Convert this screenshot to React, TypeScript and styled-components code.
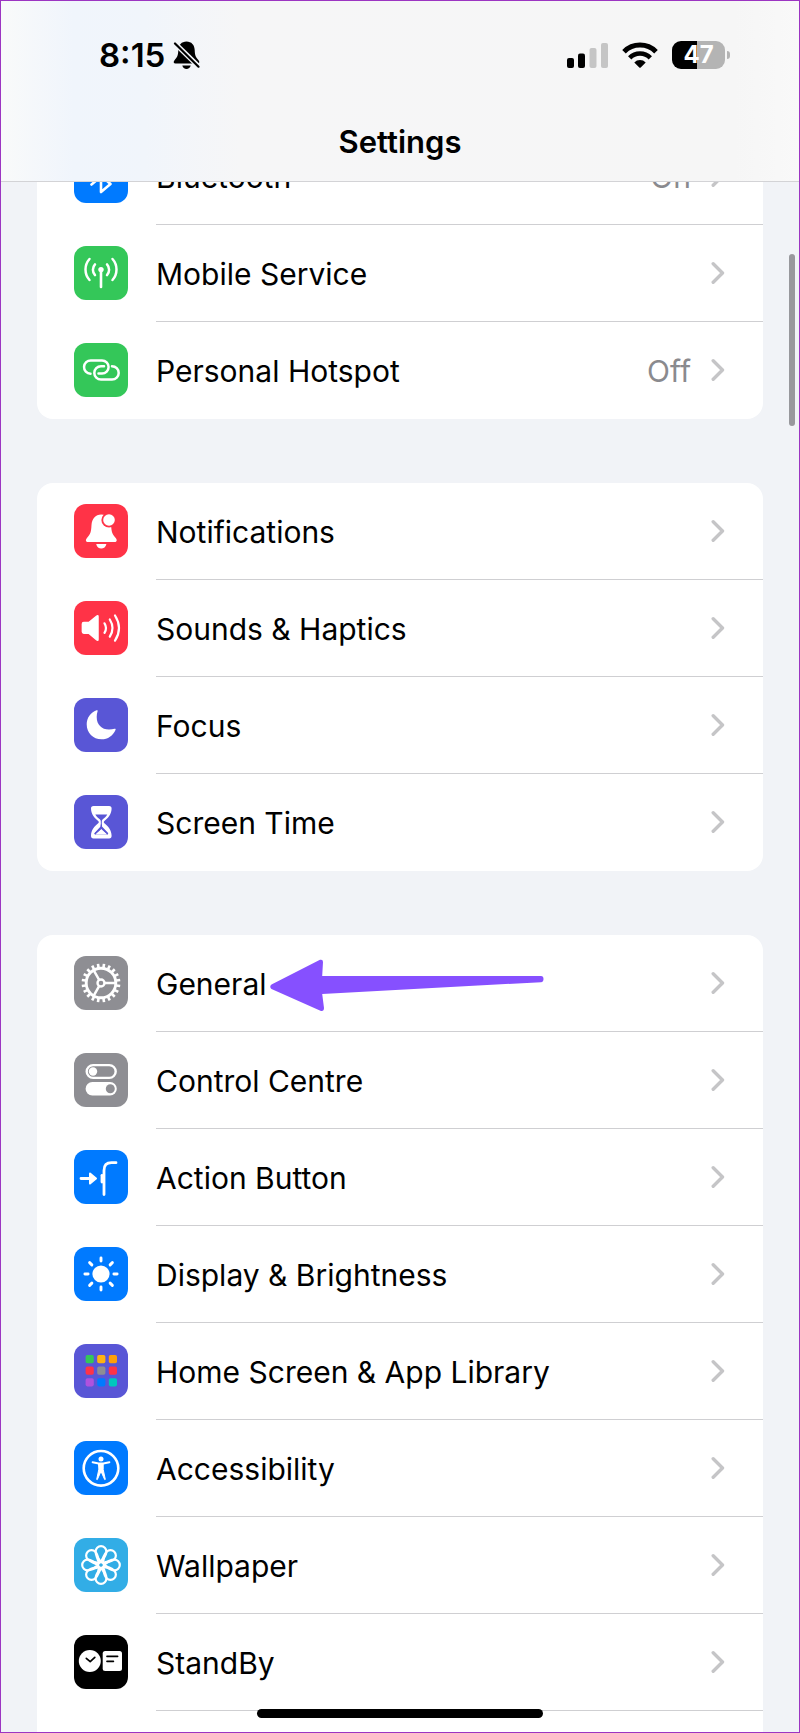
import React from "react";
import styled, { createGlobalStyle } from "styled-components";

const GlobalStyle = createGlobalStyle`
  *, *::before, *::after { box-sizing: border-box; }
  body { margin: 0; background: #f1f3f7; }
`;

const Screen = styled.div`
  position: relative;
  display: flex;
  flex-direction: column;
  height: 100vh;
  overflow: hidden;
  border: 1px solid #9c35c2;
  background: #f1f3f7;
  color: #000;
  font-family: Inter, "Liberation Sans", sans-serif;
`;

const Header = styled.header`
  flex: none;
  border-bottom: 1px solid #d3d3d6;
  background: linear-gradient(90deg, #f9fafa 0%, #f0f5fc 9%, #f1f5fb 18%, #f6f6f7 30%, #f6f6f6 92%, #f9f9f9 100%);
`;

const StatusBar = styled.div`
  display: flex;
  align-items: center;
  justify-content: space-between;
  height: 108px;
  padding: 0 69px 0 98px;
`;

const StatusGroup = styled.div<{ $gap: number }>`
  display: flex;
  align-items: center;
  gap: ${(p) => p.$gap}px;
`;

const Time = styled.time`
  font-size: 33px;
  line-height: 40px;
  font-weight: 600;
`;

const Battery = styled.div`
  display: flex;
  align-items: center;
  gap: 2px;

  &::after {
    content: "";
    width: 3px;
    height: 8px;
    border-radius: 0 4px 4px 0;
    background: #b4b4b4;
  }
`;

const BatteryBody = styled.div<{ $level: number }>`
  width: 53px;
  height: 28px;
  border-radius: 9px;
  background: linear-gradient(90deg, #000 ${(p) => p.$level}%, #b4b4b4 ${(p) => p.$level}%);
  color: #fff;
  font-size: 24px;
  line-height: 28px;
  font-weight: 700;
  text-align: center;
`;

const Title = styled.h1`
  margin: 0;
  padding-bottom: 6px;
  font-size: 31px;
  line-height: 66px;
  font-weight: 600;
  text-align: center;
`;

const Scroller = styled.main`
  flex: 1;
  min-height: 0;
  overflow: hidden;
`;

const Groups = styled.div`
  display: flex;
  flex-direction: column;
  gap: 64px;
  margin-top: -54px;
  padding: 0 36px;
`;

const Group = styled.ul`
  margin: 0;
  padding: 0;
  list-style: none;
  border-radius: 16px;
  background: #fff;
`;

const Item = styled.li`
  position: relative;
`;

const RowLink = styled.a`
  display: flex;
  gap: 28px;
  height: 97px;
  padding-left: 37px;
  color: inherit;
  text-decoration: none;
`;

const Tile = styled.span<{ $color: string }>`
  flex: none;
  width: 54px;
  height: 54px;
  margin-top: 21px;
  border-radius: 12px;
  background: ${(p) => p.$color};

  svg { display: block; }
`;

const RowBody = styled.span`
  display: flex;
  flex: 1;
  align-items: center;
  gap: 20px;
  padding-right: 38px;
  border-bottom: 1px solid #cfcfd2;

  ${Item}:last-child & { border-bottom-color: transparent; }
`;

const Label = styled.span`
  flex: 1;
  padding-top: 2px;
  font-size: 30px;
  line-height: 40px;
`;

const Value = styled(Label)`
  flex: none;
  color: #8a8a8e;
`;

const Pointer = styled.svg`
  position: absolute;
  top: 24px;
  left: 233px;
`;

const ScrollThumb = styled.div`
  position: absolute;
  top: 253px;
  right: 4px;
  width: 6px;
  height: 172px;
  border-radius: 3px;
  background: #98989d;
`;

const HomeIndicator = styled.div`
  position: absolute;
  bottom: 14px;
  left: 50%;
  width: 286px;
  height: 9px;
  border-radius: 5px;
  background: #000;
  transform: translateX(-50%);
`;

const Glyph = ({ children }: { children: React.ReactNode }) => (
  <svg width="54" height="54" viewBox="0 0 54 54" fill="none" stroke="#fff" strokeLinecap="round" strokeLinejoin="round" aria-hidden="true">
    {children}
  </svg>
);

const turns = (count: number) => Array.from({ length: count }, (_, i) => (i * 360) / count);

const BluetoothIcon = () => (
  <Glyph><path strokeWidth="2.6" d="M17.5 18.5 36.5 35 27 43V11l9.500 8.500L17.500 35.500" /></Glyph>
);

const AntennaIcon = () => (
  <Glyph>
    <circle cx="27" cy="23.600" r="2.700" fill="#fff" stroke="none" />
    <path strokeWidth="2.600" d="M27 24v17" />
    <path strokeWidth="2.500" d="M21 18.300a8 8 0 0 0 0 10.800M33 18.300a8 8 0 0 1 0 10.800M15.500 13a15.800 15.800 0 0 0 0 21M38.500 13a15.800 15.800 0 0 1 0 21" />
  </Glyph>
);

const HotspotIcon = () => (
  <Glyph>
    <path strokeWidth="2.500" d="M16.500 30.800a6.700 6.700 0 0 1 .5-13.400h11a6.600 6.600 0 0 1 0 13.200h-3.500" />
    <path strokeWidth="2.500" d="M38 23.200a6.700 6.700 0 0 1 0 13.400H27a6.700 6.700 0 0 1 0-13.400h3" />
  </Glyph>
);

const BellIcon = () => (
  <Glyph>
    <g stroke="none">
      <path fill="#fff" d="M27.300 10.500c-6 0-9.300 4.500-9.800 10.500-.4 7-1 9-4.500 13-1.800 2.300-1.200 4 1 4h26.700c2.200 0 2.700-1.700 1-4-3.500-4-4.200-6-4.600-13-.5-6-3.800-10.500-9.800-10.500ZM22.200 40h10.200c-.6 3-2.700 4.600-5.100 4.600S22.800 43 22.200 40Z" />
      <circle cx="35" cy="16" r="7.600" fill="#ff3347" />
      <circle cx="35" cy="16" r="5.800" fill="#fff" />
    </g>
  </Glyph>
);

const SpeakerIcon = () => (
  <Glyph>
    <path fill="#fff" strokeWidth="1.500" d="M9.800 21.500h5l8-6.500q1.200-.8 1.200.6v22.800q0 1.400-1.200.6l-8-6.800h-5q-1.400 0-1.400-1.400v-7.900q0-1.400 1.400-1.400Z" />
    <path strokeWidth="2.200" d="M30.500 22.300q3 4.800 0 9.600M35.800 18.500q5.400 8.600 0 17.200M41 14.500q8 12.600 0 25.200" />
  </Glyph>
);

const MoonIcon = () => (
  <Glyph>
    <path fill="#fff" stroke="none" d="M22.500 12.300c.8-.4 1.400.1 1.100.9-.6 1.600-.9 3.600-.9 5.800 0 7.500 4.900 12.600 12.300 12.600 2.100 0 4-.3 5.500-.8.900-.3 1.400.3 1 1.100-2.400 5.700-7.700 9.400-13.900 9.400-8.700 0-14.900-6.300-14.900-15 0-6.400 3.900-11.700 9.800-14Z" />
  </Glyph>
);

const HourglassIcon = () => (
  <Glyph>
    <path fill="#fff" stroke="none" d="M19.500 11h15.600c1.700 0 2.600 1 2.500 2.700-.2 5.600-3.300 9-7.200 12.300-.8.700-.8 1.600 0 2.300 3.900 3.300 7 6.700 7.200 12.300.1 1.800-.8 2.900-2.500 2.900H19.500c-1.700 0-2.600-1.100-2.500-2.900.2-5.600 3.300-9 7.200-12.300.8-.7.800-1.600 0-2.300-3.900-3.300-7-6.700-7.200-12.300-.1-1.700.8-2.700 2.500-2.700Z" />
    <path fill="#5956d6" stroke="none" d="M21.300 19.400h12c-1.200 2-2.800 3.400-4.500 4.900-.7.600-1 1.300-1 2.300v4.700l6.200 6.700c.4.800.1 1.400-.6 1.400H21.200c-.8 0-1-.7-.6-1.400l6.200-6.700v-4.700c0-1-.3-1.700-1-2.300-1.700-1.500-3.300-2.900-4.500-4.900Z" />
    <path fill="#fff" stroke="none" d="m27.300 33.800 5.300 4.700c.4.500.2 1-.4 1H22.400c-.6 0-.9-.5-.4-1Z" />
    <path stroke="#5956d6" strokeWidth="1.400" d="M27.300 30v3M21.300 38.500l5-4.500M33.300 38.500l-5-4.500" />
  </Glyph>
);

const GearIcon = () => (
  <Glyph>
    <circle cx="27" cy="27" r="14.800" strokeWidth="2.900" />
    <circle cx="27" cy="27" r="3.500" strokeWidth="2.400" />
    {turns(20).map((a) => (
      <path key={a} strokeWidth="2.600" strokeLinecap="butt" d="M42.500 27h3.900" transform={`rotate(${a + 9} 27 27)`} />
    ))}
    {turns(3).map((a) => (
      <path key={a} strokeWidth="2.500" d="M31 27h10.500" transform={`rotate(${a} 27 27)`} />
    ))}
  </Glyph>
);

const SwitchesIcon = () => (
  <Glyph>
    <rect x="12.700" y="12.100" width="29" height="12.800" rx="6.400" strokeWidth="2.400" />
    <circle cx="19" cy="18.500" r="4.200" fill="#fff" stroke="none" />
    <rect x="11.600" y="29" width="31.200" height="13.400" rx="6.700" fill="#fff" stroke="none" />
    <circle cx="36.300" cy="35.700" r="4.500" fill="#8e8e93" stroke="none" />
  </Glyph>
);

const ActionIcon = () => (
  <Glyph>
    <path strokeWidth="2.800" d="M7 28.500h10M30 44.500V20.500q0-7.800 7.500-7.800h4.500" />
    <path fill="#fff" strokeWidth="2" d="m16 23.500 6 5-6 5Z" />
    <path strokeWidth="2.800" d="M28 25.300v6.700" />
  </Glyph>
);

const SunIcon = () => (
  <Glyph>
    <circle cx="27" cy="27" r="8.600" fill="#fff" stroke="none" />
    {turns(8).map((a) => (
      <path key={a} strokeWidth="2.900" d="M39.900 27h3.200" transform={`rotate(${a} 27 27)`} />
    ))}
  </Glyph>
);

const gridColors = ["#34c759", "#ffb210", "#ff9f0a", "#ff3347", "#8e8e93", "#ff3347", "#af52de", "#007aff", "#00c7be"];

const AppGridIcon = () => (
  <Glyph>
    {gridColors.map((fill, i) => (
      <rect key={i} x={11.6 + (i % 3) * 11.6} y={11 + Math.floor(i / 3) * 11.6} width="8.200" height="8.200" rx="1.800" fill={fill} stroke="none" />
    ))}
  </Glyph>
);

const AccessibilityIcon = () => (
  <Glyph>
    <circle cx="27" cy="27.300" r="17.300" strokeWidth="2.600" />
    <circle cx="27" cy="17.900" r="2.500" fill="#fff" stroke="none" />
    <path strokeWidth="1.900" d="m18.600 21.300 6 1.200h4.800l6-1.200" />
    <path fill="#fff" strokeWidth="1" d="M24.800 22.500h4.400v6l2.100 9.900-.6.200L27.300 31h-.6l-3.400 7.600-.6-.2 2.100-9.900Z" />
  </Glyph>
);

const FlowerIcon = () => (
  <Glyph>
    <circle cx="27" cy="27" r="2.800" strokeWidth="1.900" />
    {turns(8).map((a) => (
      <path key={a} strokeWidth="2.200" d="M24 22.500c-.6-3-2.400-5-2.400-8.900a5.400 5.400 0 0 1 10.800 0c0 3.900-1.800 5.900-5.400 10.400-3.600-4.500-5.400-6.500-5.400-10.400" transform={`rotate(${a} 27 27)`} />
    ))}
  </Glyph>
);

const StandByIcon = () => (
  <Glyph>
    <circle cx="15.800" cy="26" r="11" fill="#fff" stroke="none" />
    <rect x="28.700" y="16" width="19.300" height="20" rx="2.500" fill="#fff" stroke="none" />
    <path stroke="#000" strokeWidth="1.700" d="m12.300 23.300 3.900 3.400 4.600-4.400M33 21.300h10.600M33 26.300h6.400" />
  </Glyph>
);

const MutedBell = () => (
  <svg width="27" height="28" viewBox="0 0 27 28" aria-hidden="true">
    <path fill="#000" d="M13.500.500c-5 0-8 3.500-8.200 8.500-.2 5.500-.9 7-3.800 10.200-1.400 1.800-1 3.300 1 3.300h22c2 0 2.400-1.500 1-3.300-2.900-3.200-3.600-4.700-3.800-10.200-.2-5-3.200-8.500-8.200-8.500ZM9.300 24.500h8.400c-.5 2.200-2.200 3.400-4.200 3.400s-3.700-1.200-4.200-3.400Z" />
    <path stroke="#f3f5f9" strokeWidth="5" d="M0 .500 28 27.800" />
    <path stroke="#000" strokeWidth="2.200" strokeLinecap="round" d="m2 2.500 23.500 23.200" />
  </svg>
);

const SignalBars = () => (
  <svg width="41" height="26" viewBox="0 0 41 26" aria-hidden="true">
    <rect x="0" y="16" width="7" height="10" rx="2" />
    <rect x="11" y="11.500" width="7" height="14.500" rx="2" />
    <rect x="22.500" y="6" width="7" height="20" rx="2" fill="#c5c5c5" />
    <rect x="34" y="1" width="7" height="25" rx="2" fill="#c5c5c5" />
  </svg>
);

const WifiIcon = () => (
  <svg width="36" height="26" viewBox="0 0 36 26" fill="none" stroke="#000" aria-hidden="true">
    <path strokeWidth="5" d="M2 9.700a22.600 22.600 0 0 1 32 0" />
    <path strokeWidth="4.600" d="M7.700 15.900a14.300 14.300 0 0 1 20.600 0" />
    <path fill="#000" stroke="none" d="M12.300 20.500a8 8 0 0 1 11.400 0l-5 4.900q-.7.700-1.400 0Z" />
  </svg>
);

const Chevron = () => (
  <svg width="14" height="24" viewBox="0 0 14 24" fill="none" stroke="#c5c5c7" strokeWidth="3.400" strokeLinecap="round" strokeLinejoin="round" aria-hidden="true">
    <path d="m2.200 2.800 9.300 9.200-9.300 9.200" />
  </svg>
);

type Entry = { label: string; color: string; icon: React.ReactNode; value?: string; pointed?: boolean };

const groups: Entry[][] = [
  [
    { label: "Bluetooth", color: "#007aff", icon: <BluetoothIcon />, value: "On" },
    { label: "Mobile Service", color: "#34c759", icon: <AntennaIcon /> },
    { label: "Personal Hotspot", color: "#34c759", icon: <HotspotIcon />, value: "Off" },
  ],
  [
    { label: "Notifications", color: "#ff3347", icon: <BellIcon /> },
    { label: "Sounds & Haptics", color: "#ff3347", icon: <SpeakerIcon /> },
    { label: "Focus", color: "#5956d6", icon: <MoonIcon /> },
    { label: "Screen Time", color: "#5956d6", icon: <HourglassIcon /> },
  ],
  [
    { label: "General", color: "#8e8e93", icon: <GearIcon />, pointed: true },
    { label: "Control Centre", color: "#8e8e93", icon: <SwitchesIcon /> },
    { label: "Action Button", color: "#007aff", icon: <ActionIcon /> },
    { label: "Display & Brightness", color: "#007aff", icon: <SunIcon /> },
    { label: "Home Screen & App Library", color: "#5956d6", icon: <AppGridIcon /> },
    { label: "Accessibility", color: "#007aff", icon: <AccessibilityIcon /> },
    { label: "Wallpaper", color: "#32ade6", icon: <FlowerIcon /> },
    { label: "StandBy", color: "#000", icon: <StandByIcon /> },
  ],
];

const Row = ({ label, color, icon, value, pointed }: Entry) => (
  <Item>
    <RowLink href="#">
      <Tile $color={color}>{icon}</Tile>
      <RowBody>
        <Label>{label}</Label>
        {value && <Value>{value}</Value>}
        <Chevron />
      </RowBody>
    </RowLink>
    {pointed && (
      <Pointer width="274" height="53" viewBox="0 0 274 53" fill="#8650ff" aria-hidden="true">
        <path d="M1.500 25.500 50 .8Q53 0 53 3L52.200 17H271q2.500 0 2.500 3t-2.500 3.200L52.200 35 54 49q0 3.500-3 3L1.500 30Q-1 27.500 1.500 25.500Z" />
      </Pointer>
    )}
  </Item>
);

export default function App() {
  return (
    <>
      <GlobalStyle />
      <Screen>
        <Header>
          <StatusBar>
            <StatusGroup $gap={8}>
              <Time>8:15</Time>
              <MutedBell />
            </StatusGroup>
            <StatusGroup $gap={14}>
              <SignalBars />
              <WifiIcon />
              <Battery>
                <BatteryBody $level={47}>47</BatteryBody>
              </Battery>
            </StatusGroup>
          </StatusBar>
          <Title>Settings</Title>
        </Header>
        <Scroller>
          <Groups>
            {groups.map((entries, i) => (
              <Group key={i}>
                {entries.map((entry) => (
                  <Row key={entry.label} {...entry} />
                ))}
                {i === groups.length - 1 && (
                  <Item>
                    <RowLink as="div">
                      <Tile $color="#48484f" />
                    </RowLink>
                  </Item>
                )}
              </Group>
            ))}
          </Groups>
        </Scroller>
        <ScrollThumb />
        <HomeIndicator />
      </Screen>
    </>
  );
}
